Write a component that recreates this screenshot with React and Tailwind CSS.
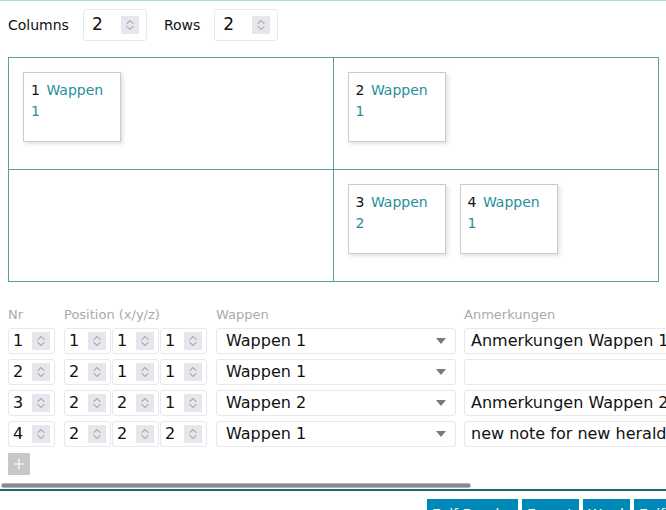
import React from "react";

function Spinner() {
  return (
    <div className="w-[18px] h-[18px] bg-[#e6e6ec] flex items-center justify-center shrink-0">
      <svg width="18" height="18" viewBox="0 0 18 18" fill="none" stroke="#8a8a8a" strokeWidth="1" strokeLinecap="round" strokeLinejoin="round">
        <path d="M6 7.5 L9 4.5 L12 7.5" />
        <path d="M6 10.5 L9 13.5 L12 10.5" />
      </svg>
    </div>
  );
}

function NumBox({ value }) {
  return (
    <div className="h-[26px] w-[47px] shrink-0 border border-[#e8e8e8] rounded-[3px] bg-white flex items-center justify-between pl-[4px] pr-[4px] text-[16px] text-[#111]">
      <span>{value}</span>
      <Spinner />
    </div>
  );
}

function TopNum({ value }) {
  return (
    <div className="h-[32px] w-[64px] shrink-0 border border-[#e8e8e8] rounded-[3px] bg-white flex items-center justify-between pl-[8px] pr-[7px] text-[17px] text-[#111]">
      <span>{value}</span>
      <Spinner />
    </div>
  );
}

function Card({ n, w }) {
  return (
    <div className="w-[98px] h-[70px] border border-[#cccccc] bg-white shadow-[2px_2px_4px_rgba(0,0,0,0.12)] px-[7px] pt-[7px] text-[14px] leading-[21px] shrink-0">
      <span className="text-[#111] mr-[2px]">{n}</span>{" "}
      <span className="text-[#26909a]">Wappen {w}</span>
    </div>
  );
}

const rows = [
  { nr: 1, x: 1, y: 1, z: 1, w: "Wappen 1", note: "Anmerkungen Wappen 1" },
  { nr: 2, x: 2, y: 1, z: 1, w: "Wappen 1", note: "" },
  { nr: 3, x: 2, y: 2, z: 1, w: "Wappen 2", note: "Anmerkungen Wappen 2" },
  { nr: 4, x: 2, y: 2, z: 2, w: "Wappen 1", note: "new note for new heraldry" },
];

export default function App() {
  return (
    <div className="w-[666px] h-[510px] overflow-hidden bg-white border-t border-[#acdde0] font-['DejaVu_Sans',sans-serif] text-[#111]">
      <div className="flex items-center pl-[8px] pt-[8px] text-[14px]">
        <span>Columns</span>
        <div className="ml-[14px]"><TopNum value="2" /></div>
        <span className="ml-[17px]">Rows</span>
        <div className="ml-[14px]"><TopNum value="2" /></div>
      </div>

      <div className="ml-[8px] mt-[16px] w-[651px] h-[225px] border border-[#5b9e9e] grid grid-cols-2 grid-rows-2">
        <div className="border-r border-b border-[#5b9e9e] p-[14px] flex gap-[14px]">
          <Card n={1} w={1} />
        </div>
        <div className="border-b border-[#5b9e9e] p-[14px] flex gap-[14px]">
          <Card n={2} w={1} />
        </div>
        <div className="border-r border-[#5b9e9e] p-[14px] flex gap-[14px]"></div>
        <div className="p-[14px] flex gap-[14px]">
          <Card n={3} w={2} />
          <Card n={4} w={1} />
        </div>
      </div>

      <div className="w-[666px] overflow-hidden">
        <div className="w-[960px] pl-[8px]">
          <div className="mt-[25px] flex h-[16px] leading-[16px] text-[13px] text-[#aaaaaa]">
            <div className="w-[56px] shrink-0">Nr</div>
            <div className="w-[152px] shrink-0">Position (x/y/z)</div>
            <div className="w-[248px] shrink-0">Wappen</div>
            <div className="shrink-0">Anmerkungen</div>
          </div>

          <div className="mt-[5px] flex flex-col gap-[5px]">
            {rows.map((r) => (
              <div key={r.nr} className="flex items-center">
                <NumBox value={r.nr} />
                <div className="ml-[9px] flex gap-[1px] shrink-0">
                  <NumBox value={r.x} />
                  <NumBox value={r.y} />
                  <NumBox value={r.z} />
                </div>
                <div className="ml-[9px] h-[26px] w-[240px] shrink-0 border border-[#e8e8e8] rounded-[3px] bg-white flex items-center justify-between pl-[9px] pr-[9px] text-[16px]">
                  <span>{r.w}</span>
                  <svg width="10" height="6" viewBox="0 0 10 6"><path d="M0 0 H10 L5 6 Z" fill="#7a7a7a" /></svg>
                </div>
                <div className="ml-[8px] h-[26px] w-[260px] shrink-0 border border-[#e8e8e8] rounded-[3px] bg-white flex items-center pl-[6px] text-[16px] whitespace-nowrap overflow-hidden">
                  {r.note}
                </div>
              </div>
            ))}
          </div>

          <div className="mt-[6px] w-[22px] h-[22px] bg-[#c8c8c8] flex items-center justify-center">
            <svg width="10" height="10" viewBox="0 0 10 10" stroke="#ffffff" strokeWidth="1.2"><path d="M5 0 V10 M0 5 H10" /></svg>
          </div>
        </div>
      </div>

      <div className="mt-[8px] ml-[1px] w-[470px] h-[5px] rounded-full bg-[#888888] border border-[#b5b5b5]"></div>
      <div className="mt-[1px] h-[2px] bg-[#17696e]"></div>

      <div className="mt-[8px] flex gap-[4px] pl-[427px] text-[14px] leading-[20px] text-white whitespace-nowrap">
        <div className="w-[91px] h-[30px] bg-[#0088b8] pl-[5px] pt-[5px] shrink-0 overflow-hidden">Exif Drucken</div>
        <div className="w-[57px] h-[30px] bg-[#0088b8] pl-[5px] pt-[5px] shrink-0 overflow-hidden">Export</div>
        <div className="w-[47px] h-[30px] bg-[#0088b8] pl-[5px] pt-[5px] shrink-0 overflow-hidden">Word</div>
        <div className="w-[60px] h-[30px] bg-[#0088b8] pl-[5px] pt-[5px] shrink-0 overflow-hidden">Exif</div>
      </div>
    </div>
  );
}
